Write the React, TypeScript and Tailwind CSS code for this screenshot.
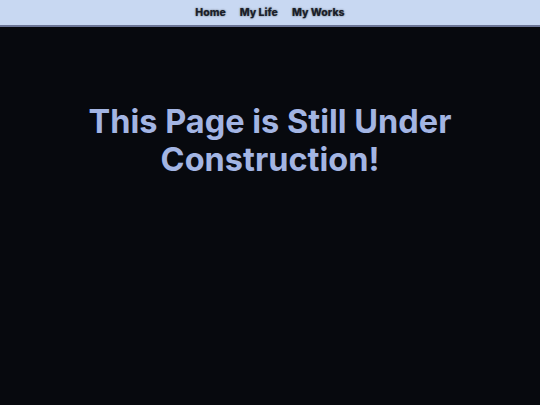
export default function App() {
  return (
    <div className="min-h-screen bg-[#07090e] font-['Inter',sans-serif]">
      <nav className="flex h-[27px] items-center justify-center gap-[14px] border-b-2 border-[#6b7596] bg-[#c8d8f2] text-[10.5px] font-extrabold text-[#1b1f2a] [text-shadow:0_0_2px_rgba(0,0,0,0.55)]">
        <a href="#">Home</a>
        <a href="#">My Life</a>
        <a href="#">My Works</a>
      </nav>
      <main className="px-6 pt-[76px] text-center">
        <h1 className="text-[32.5px] font-bold leading-[38px] text-[#a3b5e3]">
          This Page is Still Under
          <br />
          Construction!
        </h1>
      </main>
    </div>
  )
}
